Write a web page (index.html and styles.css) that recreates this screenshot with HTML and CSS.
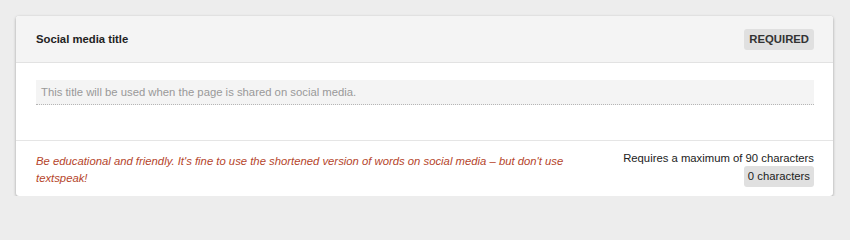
FILE: index.html
```html
<!DOCTYPE html>
<html>
<head>
<meta charset="utf-8">
<link rel="stylesheet" href="styles.css">
</head>
<body>
<div class="card">
  <div class="card-header">
    <span class="title">Social media title</span>
    <span class="badge">REQUIRED</span>
  </div>
  <div class="card-body">
    <div class="input">This title will be used when the page is shared on social media.</div>
  </div>
  <div class="card-footer">
    <p class="hint">Be educational and friendly. It's fine to use the shortened version of words on social media – but don't use textspeak!</p>
    <div class="limits">
      <span class="max">Requires a maximum of 90 characters</span>
      <span class="count">0 characters</span>
    </div>
  </div>
</div>
</body>
</html>
```
FILE: styles.css
```css
html, body {
  margin: 0;
  padding: 0;
}
body {
  background: #ededed;
  font-family: "Liberation Sans", Arial, sans-serif;
  font-size: 11.3px;
  color: #222;
  padding: 16px 17px 0 16px;
}
.card {
  background: #fff;
  border-radius: 3px;
  box-shadow: 0 1px 3px rgba(0, 0, 0, 0.35);
  overflow: hidden;
}
.card-header {
  height: 46px;
  background: #f4f4f4;
  border-bottom: 1px solid #e2e2e2;
  display: flex;
  align-items: center;
  justify-content: space-between;
  padding: 0 19px 0 20px;
}
.title {
  font-weight: bold;
  color: #222;
}
.badge {
  background: #e0e0e0;
  border-radius: 3px;
  font-weight: bold;
  color: #333;
  padding: 0 5px;
  height: 21px;
  line-height: 21px;
}
.card-body {
  padding: 17px 19px 35px 20px;
}
.input {
  background: #f4f4f4;
  height: 24px;
  line-height: 24px;
  padding: 0 5px;
  color: #999;
  border-bottom: 1px dotted #b5b5b5;
}
.card-footer {
  border-top: 1px solid #e5e5e5;
  display: flex;
  justify-content: space-between;
  padding: 10px 19px 9px 20px;
}
.hint {
  margin: 0;
  padding-top: 2px;
  font-style: italic;
  color: #b5452b;
  line-height: 17px;
  width: 545px;
}
.limits {
  display: flex;
  flex-direction: column;
  align-items: flex-end;
  gap: 1px;
}
.max {
  line-height: 14px;
  color: #222;
}
.count {
  background: #e0e0e0;
  border-radius: 3px;
  padding: 0 4px;
  height: 21px;
  line-height: 21px;
  color: #222;
}
```
